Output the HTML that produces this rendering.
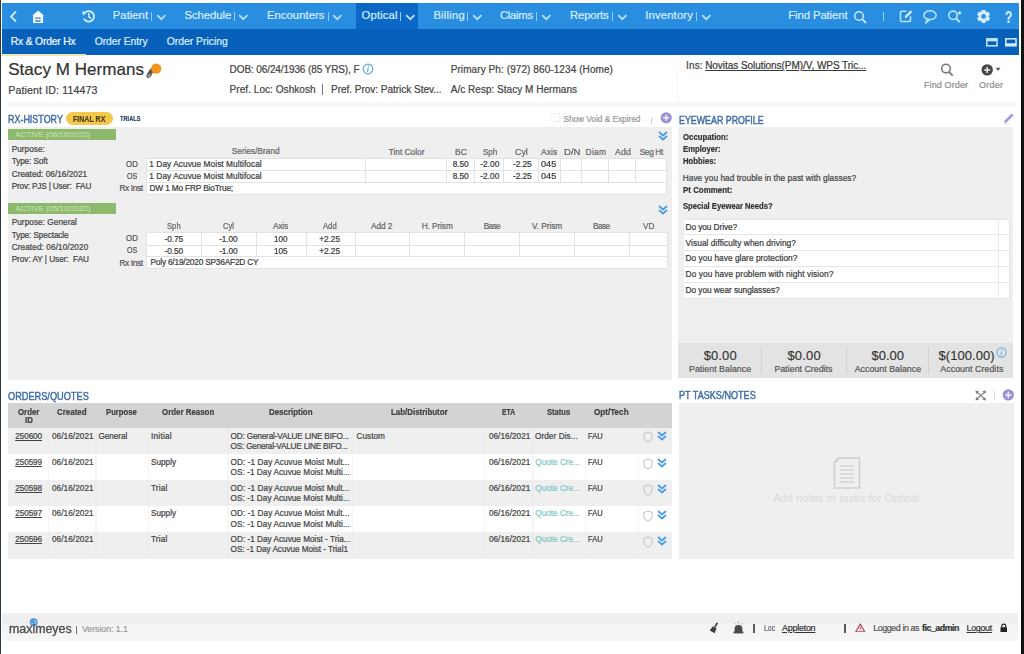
<!DOCTYPE html>
<html><head><meta charset="utf-8"><title>MaximEyes - Rx & Order Hx</title>
<style>
html,body{margin:0;padding:0;width:1024px;height:654px;overflow:hidden;background:#fff;}
body{position:relative;font-family:"Liberation Sans",sans-serif;}
body>div,body>svg{position:absolute;}
.t{white-space:pre;line-height:1;transform-origin:0 0;-webkit-text-stroke:0.22px currentColor;}
</style></head><body>
<div style="left:0.0px;top:0.0px;width:1024.0px;height:654.0px;background:#fff;"></div>
<div style="left:0.0px;top:0.0px;width:1.2px;height:654.0px;background:#2c3946;"></div>
<div style="left:1021.0px;top:0.0px;width:3.0px;height:654.0px;background:#121212;"></div>
<div style="left:2.0px;top:3.0px;width:1017.0px;height:27.0px;background:#2a8ee0;"></div>
<div style="left:356.0px;top:3.0px;width:62.0px;height:27.0px;background:#0b68c6;"></div>
<div style="left:150.5px;top:12.0px;width:1.0px;height:9.0px;background:#8fcfff;"></div>
<svg style="left:156.0px;top:13.8px" width="11" height="7" viewBox="0 0 11 7"><path d="M1.2 1.2 L5.3 5.2 L9.4 1.2" fill="none" stroke="#b8e2ff" stroke-width="1.7"/></svg>
<div style="left:233.5px;top:12.0px;width:1.0px;height:9.0px;background:#8fcfff;"></div>
<svg style="left:237.8px;top:13.8px" width="11" height="7" viewBox="0 0 11 7"><path d="M1.2 1.2 L5.3 5.2 L9.4 1.2" fill="none" stroke="#b8e2ff" stroke-width="1.7"/></svg>
<div style="left:327.5px;top:12.0px;width:1.0px;height:9.0px;background:#8fcfff;"></div>
<svg style="left:331.8px;top:13.8px" width="11" height="7" viewBox="0 0 11 7"><path d="M1.2 1.2 L5.3 5.2 L9.4 1.2" fill="none" stroke="#b8e2ff" stroke-width="1.7"/></svg>
<div style="left:399.5px;top:12.0px;width:1.0px;height:9.0px;background:#8fcfff;"></div>
<svg style="left:404.8px;top:13.8px" width="11" height="7" viewBox="0 0 11 7"><path d="M1.2 1.2 L5.3 5.2 L9.4 1.2" fill="none" stroke="#b8e2ff" stroke-width="1.7"/></svg>
<div style="left:466.5px;top:12.0px;width:1.0px;height:9.0px;background:#8fcfff;"></div>
<svg style="left:471.8px;top:13.8px" width="11" height="7" viewBox="0 0 11 7"><path d="M1.2 1.2 L5.3 5.2 L9.4 1.2" fill="none" stroke="#b8e2ff" stroke-width="1.7"/></svg>
<div style="left:535.5px;top:12.0px;width:1.0px;height:9.0px;background:#8fcfff;"></div>
<svg style="left:540.8px;top:13.8px" width="11" height="7" viewBox="0 0 11 7"><path d="M1.2 1.2 L5.3 5.2 L9.4 1.2" fill="none" stroke="#b8e2ff" stroke-width="1.7"/></svg>
<div style="left:611.5px;top:12.0px;width:1.0px;height:9.0px;background:#8fcfff;"></div>
<svg style="left:617.2px;top:13.8px" width="11" height="7" viewBox="0 0 11 7"><path d="M1.2 1.2 L5.3 5.2 L9.4 1.2" fill="none" stroke="#b8e2ff" stroke-width="1.7"/></svg>
<div style="left:695.5px;top:12.0px;width:1.0px;height:9.0px;background:#8fcfff;"></div>
<svg style="left:700.8px;top:13.8px" width="11" height="7" viewBox="0 0 11 7"><path d="M1.2 1.2 L5.3 5.2 L9.4 1.2" fill="none" stroke="#b8e2ff" stroke-width="1.7"/></svg>
<svg style="left:853.0px;top:9.5px" width="15" height="14" viewBox="0 0 15 14"><circle cx="6" cy="6" r="4.3" fill="none" stroke="#c4e7ff" stroke-width="1.6"/><path d="M9.2 9.2 L13 13" stroke="#c4e7ff" stroke-width="1.8"/></svg>
<div style="left:882.5px;top:12.0px;width:1.0px;height:9.0px;background:#8fd0ff;"></div>
<svg style="left:899.0px;top:9.0px" width="15" height="14" viewBox="0 0 15 14"><path d="M7.5 2.2 H2.8 a1.3 1.3 0 0 0 -1.3 1.3 V11.2 a1.3 1.3 0 0 0 1.3 1.3 H10.2 a1.3 1.3 0 0 0 1.3 -1.3 V7.2" fill="none" stroke="#b8e3ff" stroke-width="1.6"/><path d="M5.6 9.2 L6.1 6.8 L11.6 1.3 L13.4 3.1 L7.9 8.6 Z" fill="#c8eaff"/></svg>
<svg style="left:922.0px;top:8.5px" width="16" height="15" viewBox="0 0 16 15"><ellipse cx="8" cy="6.2" rx="6.2" ry="4.4" fill="none" stroke="#b8e3ff" stroke-width="1.5"/><path d="M5 10 L4 13.8 L7.8 10.6" fill="none" stroke="#b8e3ff" stroke-width="1.4"/></svg>
<svg style="left:947.0px;top:8.0px" width="16" height="16" viewBox="0 0 16 16"><circle cx="6" cy="7.3" r="4.2" fill="none" stroke="#b8e3ff" stroke-width="1.6"/><path d="M9.1 10.5 L12.8 14.2" stroke="#b8e3ff" stroke-width="1.9"/><path d="M12.6 3.2 V6.6 M10.9 4.9 H14.3" stroke="#c8eaff" stroke-width="1.5"/></svg>
<svg style="left:977.0px;top:9.6px" width="13.2" height="13" viewBox="0 0 13.2 13"><path d="M5.05,0.09 L8.15,0.09 L8.73,2.21 L9.16,2.46 L11.30,1.91 L12.84,4.58 L11.29,6.15 L11.29,6.65 L12.84,8.22 L11.30,10.89 L9.16,10.34 L8.73,10.59 L8.15,12.71 L5.05,12.71 L4.47,10.59 L4.04,10.34 L1.90,10.89 L0.36,8.22 L1.91,6.65 L1.91,6.15 L0.36,4.58 L1.90,1.91 L4.04,2.46 L4.47,2.21 Z M9.2,6.4 A2.6 2.6 0 1 0 4.0,6.4 A2.6 2.6 0 1 0 9.2,6.4 Z" fill="#d8f0ff" fill-rule="evenodd" stroke="#d8f0ff" stroke-width="0.6" stroke-linejoin="round"/></svg>
<svg style="left:8.5px;top:10.0px" width="9" height="13" viewBox="0 0 9 13"><path d="M7 1.5 L2 6.5 L7 11.5" fill="none" stroke="#cfeaff" stroke-width="1.8"/></svg>
<svg style="left:31.5px;top:9.5px" width="13" height="14" viewBox="0 0 13 14"><path d="M6.1 0.4 L11.9 5.6 L11.1 5.6 L11.1 13.1 L1.1 13.1 L1.1 5.6 L0.3 5.6 Z" fill="#eefaff"/><path d="M3.4 8.1 H5.8 M6.2 8.1 H8.6 M3.4 11 H5.8 M6.2 11 H8.6" stroke="#3a6f9e" stroke-width="1.3"/></svg>
<svg style="left:60.0px;top:14.0px" width="8" height="7" viewBox="0 0 8 7"><path d="M1 6.5 L7 0.5" stroke="#3f86cf" stroke-width="1.2"/></svg>
<svg style="left:80.5px;top:9.0px" width="15" height="15" viewBox="0 0 15 15"><path d="M2.9 9.64 A5.3 5.3 0 1 0 3.76 3.85" fill="none" stroke="#dcf1ff" stroke-width="1.8"/><path d="M1.0 2.6 L5.4 2.9 L2.4 6.8 Z" fill="#dcf1ff"/><path d="M7.8 3.9 V7.6 L10 9.7" fill="none" stroke="#d0ecff" stroke-width="1.5"/></svg>
<div style="left:2.0px;top:29.0px;width:1017.0px;height:26.0px;background:#0761ba;"></div>
<div style="left:2.0px;top:53.6px;width:84.0px;height:2.4px;background:#ece5b8;"></div>
<svg style="left:986.0px;top:37.5px" width="12" height="9" viewBox="0 0 12 9"><rect x="0.8" y="0.8" width="10.2" height="7" fill="none" stroke="#bfe6ff" stroke-width="1.5"/><rect x="0.8" y="0.8" width="10.2" height="2.5" fill="#bfe6ff"/></svg>
<svg style="left:1004.5px;top:37.5px" width="12" height="9" viewBox="0 0 12 9"><rect x="0.8" y="0.8" width="10.2" height="7" fill="none" stroke="#d6f0ff" stroke-width="1.5"/><rect x="0.8" y="5.3" width="10.2" height="2.5" fill="#d6f0ff"/></svg>
<div style="left:8.0px;top:102.0px;width:1008.0px;height:5.0px;background:linear-gradient(#fafafa,#f5f5f5 45%,#fbfbfb);filter:blur(0.6px);"></div>
<div style="left:676.5px;top:58.0px;width:1.0px;height:43.0px;background:#f6f6f6;"></div>
<svg style="left:145.0px;top:61.5px" width="18" height="17" viewBox="0 0 18 17"><path d="M1.2 13.6 L5.6 6.2 L9.8 10.6 Z" fill="#505050"/><ellipse cx="4.2" cy="13.4" rx="3.1" ry="1.9" fill="#6a6a6a" transform="rotate(-35 4.2 13.4)"/><ellipse cx="4.0" cy="13.6" rx="1.3" ry="0.8" fill="#bbb" transform="rotate(-35 4 13.6)"/><circle cx="11.2" cy="6.6" r="5.2" fill="#f5961c"/></svg>
<svg style="left:361.5px;top:62.5px" width="12" height="12" viewBox="0 0 12 12"><circle cx="6" cy="6" r="4.8" fill="none" stroke="#5aa6e6" stroke-width="1.2"/><path d="M6.2 4.8 L5.5 9" stroke="#5aa6e6" stroke-width="1.1"/><circle cx="6.4" cy="3.3" r="0.7" fill="#5aa6e6"/></svg>
<div style="left:322.3px;top:84.0px;width:1.0px;height:11.0px;background:#777;"></div>
<svg style="left:937.5px;top:61.5px" width="16" height="15" viewBox="0 0 16 15"><circle cx="8" cy="6.6" r="4.3" fill="none" stroke="#7a7a7a" stroke-width="1.6"/><path d="M11.1 9.8 L14.6 13.6" stroke="#7a7a7a" stroke-width="1.9"/></svg>
<svg style="left:980.0px;top:62.5px" width="22" height="13" viewBox="0 0 22 13"><circle cx="7.2" cy="6.9" r="5.7" fill="#474747"/><path d="M7.2 3.9 V9.9 M4.2 6.9 H10.2" stroke="#eee" stroke-width="1.5"/><path d="M15.8 4.8 H20.4 L18.1 8 Z" fill="#555"/></svg>
<div style="left:66.0px;top:112.0px;width:47.0px;height:13.0px;background:#f4c84a;border-radius:7px;"></div>
<div style="left:550.0px;top:113.0px;width:10.0px;height:9.0px;background:#fff;box-shadow:inset 0 0 0 1px #efefef;border-radius:1px;"></div>
<div style="left:651.2px;top:118.0px;width:1.0px;height:6.0px;background:#cfcfcf;"></div>
<svg style="left:660.0px;top:112.4px" width="12.5" height="11.5" viewBox="0 0 12.5 11.5"><circle cx="6.2" cy="5.8" r="5.6" fill="#9b91d6"/><path d="M6.2 2.8 V8.8 M3.2 5.8 H9.2" stroke="#f4f2ff" stroke-width="1.5"/></svg>
<div style="left:8.0px;top:127.0px;width:664.0px;height:253.0px;background:#efefef;"></div>
<svg style="left:658.4px;top:131.2px" width="10" height="10" viewBox="0 0 10 10"><path d="M1 1 L5 4.5 L9 1 M1 5 L5 8.5 L9 5" fill="none" stroke="#4b9de2" stroke-width="1.7"/></svg>
<svg style="left:658.2px;top:205.0px" width="10" height="10" viewBox="0 0 10 10"><path d="M1 1 L5 4.5 L9 1 M1 5 L5 8.5 L9 5" fill="none" stroke="#4b9de2" stroke-width="1.7"/></svg>
<div style="left:8.0px;top:129.0px;width:108.0px;height:11.0px;background:#8db96d;"></div>
<div style="left:146.0px;top:158.0px;width:520.0px;height:37.0px;background:#fff;"></div>
<div style="left:146.0px;top:157.8px;width:520.0px;height:1.0px;background:#e2e2e2;"></div>
<div style="left:146.0px;top:170.0px;width:520.0px;height:1.0px;background:#e2e2e2;"></div>
<div style="left:146.0px;top:182.1px;width:520.0px;height:1.0px;background:#e2e2e2;"></div>
<div style="left:146.0px;top:194.1px;width:520.0px;height:1.0px;background:#e2e2e2;"></div>
<div style="left:145.8px;top:158.0px;width:1.0px;height:37.0px;background:#e2e2e2;"></div>
<div style="left:666.0px;top:158.0px;width:1.0px;height:37.0px;background:#e2e2e2;"></div>
<div style="left:365.1px;top:158.0px;width:1.0px;height:25.0px;background:#e2e2e2;"></div>
<div style="left:446.4px;top:158.0px;width:1.0px;height:25.0px;background:#e2e2e2;"></div>
<div style="left:474.2px;top:158.0px;width:1.0px;height:25.0px;background:#e2e2e2;"></div>
<div style="left:503.2px;top:158.0px;width:1.0px;height:25.0px;background:#e2e2e2;"></div>
<div style="left:537.5px;top:158.0px;width:1.0px;height:25.0px;background:#e2e2e2;"></div>
<div style="left:559.5px;top:158.0px;width:1.0px;height:25.0px;background:#e2e2e2;"></div>
<div style="left:581.4px;top:158.0px;width:1.0px;height:25.0px;background:#e2e2e2;"></div>
<div style="left:607.9px;top:158.0px;width:1.0px;height:25.0px;background:#e2e2e2;"></div>
<div style="left:634.5px;top:158.0px;width:1.0px;height:25.0px;background:#e2e2e2;"></div>
<div style="left:8.0px;top:203.0px;width:108.0px;height:11.0px;background:#8db96d;"></div>
<div style="left:147.0px;top:232.0px;width:520.0px;height:36.0px;background:#fff;"></div>
<div style="left:147.0px;top:231.5px;width:520.0px;height:1.0px;background:#e2e2e2;"></div>
<div style="left:147.0px;top:244.5px;width:520.0px;height:1.0px;background:#e2e2e2;"></div>
<div style="left:147.0px;top:256.1px;width:520.0px;height:1.0px;background:#e2e2e2;"></div>
<div style="left:147.0px;top:267.9px;width:520.0px;height:1.0px;background:#e2e2e2;"></div>
<div style="left:146.1px;top:232.0px;width:1.0px;height:36.0px;background:#e2e2e2;"></div>
<div style="left:666.5px;top:232.0px;width:1.0px;height:36.0px;background:#e2e2e2;"></div>
<div style="left:200.9px;top:232.0px;width:1.0px;height:25.0px;background:#e2e2e2;"></div>
<div style="left:255.5px;top:232.0px;width:1.0px;height:25.0px;background:#e2e2e2;"></div>
<div style="left:305.5px;top:232.0px;width:1.0px;height:25.0px;background:#e2e2e2;"></div>
<div style="left:354.6px;top:232.0px;width:1.0px;height:25.0px;background:#e2e2e2;"></div>
<div style="left:409.0px;top:232.0px;width:1.0px;height:25.0px;background:#e2e2e2;"></div>
<div style="left:463.9px;top:232.0px;width:1.0px;height:25.0px;background:#e2e2e2;"></div>
<div style="left:519.2px;top:232.0px;width:1.0px;height:25.0px;background:#e2e2e2;"></div>
<div style="left:574.1px;top:232.0px;width:1.0px;height:25.0px;background:#e2e2e2;"></div>
<div style="left:629.0px;top:232.0px;width:1.0px;height:25.0px;background:#e2e2e2;"></div>
<div style="left:8.0px;top:403.0px;width:664.0px;height:25.0px;background:#d3d3d3;"></div>
<div style="left:8.0px;top:428.0px;width:664.0px;height:26.0px;background:#efefef;"></div>
<div style="left:8.0px;top:454.0px;width:664.0px;height:26.0px;background:#ffffff;"></div>
<div style="left:8.0px;top:480.0px;width:664.0px;height:26.0px;background:#efefef;"></div>
<div style="left:8.0px;top:506.0px;width:664.0px;height:26.0px;background:#ffffff;"></div>
<div style="left:8.0px;top:532.0px;width:664.0px;height:27.0px;background:#efefef;"></div>
<div style="left:47.5px;top:428.0px;width:1.5px;height:26.0px;background:#ececec;"></div>
<div style="left:47.5px;top:454.0px;width:1.5px;height:26.0px;background:#f5f5f5;"></div>
<div style="left:47.5px;top:480.0px;width:1.5px;height:26.0px;background:#ececec;"></div>
<div style="left:47.5px;top:506.0px;width:1.5px;height:26.0px;background:#f5f5f5;"></div>
<div style="left:47.5px;top:532.0px;width:1.5px;height:27.0px;background:#ececec;"></div>
<div style="left:95.2px;top:428.0px;width:1.5px;height:26.0px;background:#ececec;"></div>
<div style="left:95.2px;top:454.0px;width:1.5px;height:26.0px;background:#f5f5f5;"></div>
<div style="left:95.2px;top:480.0px;width:1.5px;height:26.0px;background:#ececec;"></div>
<div style="left:95.2px;top:506.0px;width:1.5px;height:26.0px;background:#f5f5f5;"></div>
<div style="left:95.2px;top:532.0px;width:1.5px;height:27.0px;background:#ececec;"></div>
<div style="left:147.8px;top:428.0px;width:1.5px;height:26.0px;background:#ececec;"></div>
<div style="left:147.8px;top:454.0px;width:1.5px;height:26.0px;background:#f5f5f5;"></div>
<div style="left:147.8px;top:480.0px;width:1.5px;height:26.0px;background:#ececec;"></div>
<div style="left:147.8px;top:506.0px;width:1.5px;height:26.0px;background:#f5f5f5;"></div>
<div style="left:147.8px;top:532.0px;width:1.5px;height:27.0px;background:#ececec;"></div>
<div style="left:227.2px;top:428.0px;width:1.5px;height:26.0px;background:#ececec;"></div>
<div style="left:227.2px;top:454.0px;width:1.5px;height:26.0px;background:#f5f5f5;"></div>
<div style="left:227.2px;top:480.0px;width:1.5px;height:26.0px;background:#ececec;"></div>
<div style="left:227.2px;top:506.0px;width:1.5px;height:26.0px;background:#f5f5f5;"></div>
<div style="left:227.2px;top:532.0px;width:1.5px;height:27.0px;background:#ececec;"></div>
<div style="left:351.8px;top:428.0px;width:1.5px;height:26.0px;background:#ececec;"></div>
<div style="left:351.8px;top:454.0px;width:1.5px;height:26.0px;background:#f5f5f5;"></div>
<div style="left:351.8px;top:480.0px;width:1.5px;height:26.0px;background:#ececec;"></div>
<div style="left:351.8px;top:506.0px;width:1.5px;height:26.0px;background:#f5f5f5;"></div>
<div style="left:351.8px;top:532.0px;width:1.5px;height:27.0px;background:#ececec;"></div>
<div style="left:483.9px;top:428.0px;width:1.5px;height:26.0px;background:#ececec;"></div>
<div style="left:483.9px;top:454.0px;width:1.5px;height:26.0px;background:#f5f5f5;"></div>
<div style="left:483.9px;top:480.0px;width:1.5px;height:26.0px;background:#ececec;"></div>
<div style="left:483.9px;top:506.0px;width:1.5px;height:26.0px;background:#f5f5f5;"></div>
<div style="left:483.9px;top:532.0px;width:1.5px;height:27.0px;background:#ececec;"></div>
<div style="left:532.0px;top:428.0px;width:1.5px;height:26.0px;background:#ececec;"></div>
<div style="left:532.0px;top:454.0px;width:1.5px;height:26.0px;background:#f5f5f5;"></div>
<div style="left:532.0px;top:480.0px;width:1.5px;height:26.0px;background:#ececec;"></div>
<div style="left:532.0px;top:506.0px;width:1.5px;height:26.0px;background:#f5f5f5;"></div>
<div style="left:532.0px;top:532.0px;width:1.5px;height:27.0px;background:#ececec;"></div>
<div style="left:584.9px;top:428.0px;width:1.5px;height:26.0px;background:#ececec;"></div>
<div style="left:584.9px;top:454.0px;width:1.5px;height:26.0px;background:#f5f5f5;"></div>
<div style="left:584.9px;top:480.0px;width:1.5px;height:26.0px;background:#ececec;"></div>
<div style="left:584.9px;top:506.0px;width:1.5px;height:26.0px;background:#f5f5f5;"></div>
<div style="left:584.9px;top:532.0px;width:1.5px;height:27.0px;background:#ececec;"></div>
<div style="left:637.9px;top:428.0px;width:1.5px;height:26.0px;background:#ececec;"></div>
<div style="left:637.9px;top:454.0px;width:1.5px;height:26.0px;background:#f5f5f5;"></div>
<div style="left:637.9px;top:480.0px;width:1.5px;height:26.0px;background:#ececec;"></div>
<div style="left:637.9px;top:506.0px;width:1.5px;height:26.0px;background:#f5f5f5;"></div>
<div style="left:637.9px;top:532.0px;width:1.5px;height:27.0px;background:#ececec;"></div>
<svg style="left:642.5px;top:431.0px" width="10" height="12" viewBox="0 0 10 12"><path d="M5 1 L9 2.5 V6 C9 8.5 7.2 10.2 5 11 C2.8 10.2 1 8.5 1 6 V2.5 Z" fill="none" stroke="#c8c8c8" stroke-width="1.1"/></svg>
<svg style="left:656.8px;top:431.0px" width="10" height="10" viewBox="0 0 10 10"><path d="M1 1 L5 4.5 L9 1 M1 5 L5 8.5 L9 5" fill="none" stroke="#4b9de2" stroke-width="1.7"/></svg>
<svg style="left:642.5px;top:457.5px" width="10" height="12" viewBox="0 0 10 12"><path d="M5 1 L9 2.5 V6 C9 8.5 7.2 10.2 5 11 C2.8 10.2 1 8.5 1 6 V2.5 Z" fill="none" stroke="#c8c8c8" stroke-width="1.1"/></svg>
<svg style="left:656.8px;top:457.5px" width="10" height="10" viewBox="0 0 10 10"><path d="M1 1 L5 4.5 L9 1 M1 5 L5 8.5 L9 5" fill="none" stroke="#4b9de2" stroke-width="1.7"/></svg>
<svg style="left:642.5px;top:483.5px" width="10" height="12" viewBox="0 0 10 12"><path d="M5 1 L9 2.5 V6 C9 8.5 7.2 10.2 5 11 C2.8 10.2 1 8.5 1 6 V2.5 Z" fill="none" stroke="#c8c8c8" stroke-width="1.1"/></svg>
<svg style="left:656.8px;top:483.5px" width="10" height="10" viewBox="0 0 10 10"><path d="M1 1 L5 4.5 L9 1 M1 5 L5 8.5 L9 5" fill="none" stroke="#4b9de2" stroke-width="1.7"/></svg>
<svg style="left:642.5px;top:509.5px" width="10" height="12" viewBox="0 0 10 12"><path d="M5 1 L9 2.5 V6 C9 8.5 7.2 10.2 5 11 C2.8 10.2 1 8.5 1 6 V2.5 Z" fill="none" stroke="#c8c8c8" stroke-width="1.1"/></svg>
<svg style="left:656.8px;top:509.5px" width="10" height="10" viewBox="0 0 10 10"><path d="M1 1 L5 4.5 L9 1 M1 5 L5 8.5 L9 5" fill="none" stroke="#4b9de2" stroke-width="1.7"/></svg>
<svg style="left:642.5px;top:535.5px" width="10" height="12" viewBox="0 0 10 12"><path d="M5 1 L9 2.5 V6 C9 8.5 7.2 10.2 5 11 C2.8 10.2 1 8.5 1 6 V2.5 Z" fill="none" stroke="#c8c8c8" stroke-width="1.1"/></svg>
<svg style="left:656.8px;top:535.5px" width="10" height="10" viewBox="0 0 10 10"><path d="M1 1 L5 4.5 L9 1 M1 5 L5 8.5 L9 5" fill="none" stroke="#4b9de2" stroke-width="1.7"/></svg>
<svg style="left:1001.5px;top:111.5px" width="13" height="13" viewBox="0 0 13 13"><path d="M2 11 L2.6 8.4 L9.6 1.4 L11.6 3.4 L4.6 10.4 Z" fill="#a59ddc"/><path d="M1.5 12 H6" stroke="#d6d2f0" stroke-width="0.8"/></svg>
<div style="left:678.0px;top:127.0px;width:335.0px;height:251.0px;background:#efefef;"></div>
<div style="left:683.0px;top:220.0px;width:326.0px;height:78.0px;background:#fff;"></div>
<div style="left:683.0px;top:219.2px;width:326.0px;height:1.0px;background:#e6e6e6;"></div>
<div style="left:683.0px;top:234.4px;width:326.0px;height:1.0px;background:#e6e6e6;"></div>
<div style="left:683.0px;top:250.3px;width:326.0px;height:1.0px;background:#e6e6e6;"></div>
<div style="left:683.0px;top:265.9px;width:326.0px;height:1.0px;background:#e6e6e6;"></div>
<div style="left:683.0px;top:281.5px;width:326.0px;height:1.0px;background:#e6e6e6;"></div>
<div style="left:683.0px;top:297.7px;width:326.0px;height:1.0px;background:#e6e6e6;"></div>
<div style="left:682.6px;top:220.0px;width:1.0px;height:78.0px;background:#f0f0f0;"></div>
<div style="left:1008.5px;top:220.0px;width:1.0px;height:78.0px;background:#e2e2e2;"></div>
<div style="left:998.2px;top:220.0px;width:1.0px;height:78.0px;background:#e8e8e8;"></div>
<div style="left:678.0px;top:343.0px;width:335.0px;height:35.0px;background:#e3e3e3;"></div>
<div style="left:760.5px;top:347.0px;width:1.0px;height:28.0px;background:#d2d2d2;"></div>
<div style="left:845.8px;top:347.0px;width:1.0px;height:28.0px;background:#d2d2d2;"></div>
<div style="left:928.1px;top:347.0px;width:1.0px;height:28.0px;background:#d2d2d2;"></div>
<svg style="left:995.8px;top:346.5px" width="11" height="11" viewBox="0 0 11 11"><circle cx="5.5" cy="5.5" r="4.6" fill="none" stroke="#6ab0ea" stroke-width="1.1"/><path d="M5.7 4.6 L5.1 8.2" stroke="#6ab0ea" stroke-width="1"/><circle cx="5.9" cy="3.1" r="0.6" fill="#6ab0ea"/></svg>
<svg style="left:974.5px;top:389.8px" width="11.5" height="11" viewBox="0 0 11.5 11"><path d="M2.2 2.2 L9.3 8.8 M9.3 2.2 L2.2 8.8" stroke="#8a8a8a" stroke-width="1.3"/><path d="M0.4 0.4 L4 1.2 L1.2 4 Z M11.1 0.4 L7.5 1.2 L10.3 4 Z M0.4 10.6 L4 9.8 L1.2 7 Z M11.1 10.6 L7.5 9.8 L10.3 7 Z" fill="#7c7c7c"/></svg>
<div style="left:993.5px;top:391.0px;width:1.0px;height:8.0px;background:#d6d6d6;"></div>
<svg style="left:1001.5px;top:389.0px" width="13" height="12" viewBox="0 0 13 12"><circle cx="6.3" cy="5.9" r="5.7" fill="#9b91d6"/><path d="M6.3 2.8 V9 M3.2 5.9 H9.4" stroke="#f4f2ff" stroke-width="1.5"/></svg>
<div style="left:679.0px;top:403.0px;width:335.0px;height:156.0px;background:#efefef;"></div>
<svg style="left:833.0px;top:456.5px" width="28" height="32" viewBox="0 0 28 32"><path d="M5 1 H26.5 V31 H1.5 V4.5 Z" fill="none" stroke="#d0d0d0" stroke-width="1.6"/><path d="M1.5 4.5 H5 V1" fill="none" stroke="#d0d0d0" stroke-width="1.2"/><path d="M7 9 H21 M7 13 H21 M7 17 H21 M7 21 H21 M7 25 H21" stroke="#d3d3d3" stroke-width="1.5"/></svg>
<div style="left:2.0px;top:613.0px;width:1016.0px;height:28.0px;background:linear-gradient(#f1f1f1,#eeeeee 30%,#f4f4f4 45%,#f5f5f5 90%,#f8f8f8);"></div>
<svg style="left:28.5px;top:617.5px" width="9.5" height="8.5" viewBox="0 0 9.5 8.5"><circle cx="4.7" cy="4.2" r="3.9" fill="#4a95d8"/><path d="M4.7 2.2 a2 2 0 1 1 -2 2" fill="none" stroke="#b9dcf6" stroke-width="0.9"/></svg>
<div style="left:76.1px;top:626.0px;width:1.0px;height:8.0px;background:#777;"></div>
<svg style="left:708.5px;top:621.5px" width="10" height="12" viewBox="0 0 10 12"><path d="M8.4 0.8 L5.9 5" stroke="#444" stroke-width="1.7"/><path d="M3.9 4.2 L7.5 6.3 L5.7 11.3 L0.7 8.5 Z" fill="#3f3f3f"/></svg>
<svg style="left:732.5px;top:620.5px" width="11" height="13" viewBox="0 0 11 13"><path d="M1.6 11 V7.8 a3.9 3.9 0 0 1 7.8 0 V11 Z" fill="#4a4a4a"/><rect x="0.6" y="10.6" width="9.8" height="1.8" fill="#4a4a4a"/><path d="M5.5 0.6 V2.4 M1.4 2.2 L2.6 3.4 M9.6 2.2 L8.4 3.4" stroke="#888" stroke-width="0.9"/></svg>
<div style="left:753.0px;top:624.0px;width:1.6px;height:9.0px;background:#5a5a5a;"></div>
<div style="left:844.4px;top:624.0px;width:1.6px;height:9.0px;background:#5a5a5a;"></div>
<svg style="left:855.3px;top:622.6px" width="10.5" height="9.6" viewBox="0 0 10.5 9.6"><path d="M5.25 1 L9.7 8.9 H0.8 Z" fill="none" stroke="#b9505c" stroke-width="1.3" stroke-linejoin="round"/><path d="M5.25 4 V6.6" stroke="#b9505c" stroke-width="1"/><circle cx="5.25" cy="7.7" r="0.5" fill="#b9505c"/></svg>
<svg style="left:999.5px;top:622.5px" width="7.5" height="9.5" viewBox="0 0 7.5 9.5"><path d="M1.8 4.2 V3 a1.95 1.95 0 0 1 3.9 0 V4.2" fill="none" stroke="#222" stroke-width="1.2"/><rect x="0.5" y="4.2" width="6.5" height="5" fill="#222"/></svg>
<div class="t" style="left:112.80px;top:10.23px;font-size:11.3px;color:#d6edff;letter-spacing:0.011px;">Patient</div>
<div class="t" style="left:184.40px;top:10.23px;font-size:11.3px;color:#d6edff;letter-spacing:-0.046px;">Schedule</div>
<div class="t" style="left:266.90px;top:10.23px;font-size:11.3px;color:#d6edff;letter-spacing:0.045px;">Encounters</div>
<div class="t" style="left:361.60px;top:10.23px;font-size:11.3px;color:#d6edff;letter-spacing:0.125px;">Optical</div>
<div class="t" style="left:433.40px;top:10.23px;font-size:11.3px;color:#d6edff;letter-spacing:0.191px;">Billing</div>
<div class="t" style="left:500.00px;top:10.23px;font-size:11.3px;color:#d6edff;letter-spacing:-0.294px;">Claims</div>
<div class="t" style="left:570.00px;top:10.23px;font-size:11.3px;color:#d6edff;letter-spacing:-0.151px;">Reports</div>
<div class="t" style="left:645.30px;top:10.23px;font-size:11.3px;color:#d6edff;letter-spacing:0.135px;">Inventory</div>
<div class="t" style="left:788.30px;top:10.23px;font-size:11.3px;color:#d6edff;letter-spacing:-0.095px;">Find Patient</div>
<div class="t" style="left:1005.00px;top:8.83px;font-size:16.5px;color:#d0ecff;font-weight:700;transform:scaleX(0.7400);transform-origin:0.00px 0;">?</div>
<div class="t" style="left:10.70px;top:37.08px;font-size:10.3px;color:#eef7ff;letter-spacing:-0.158px;">Rx &amp; Order Hx</div>
<div class="t" style="left:94.70px;top:37.08px;font-size:10.3px;color:#dbeeff;letter-spacing:-0.027px;">Order Entry</div>
<div class="t" style="left:166.80px;top:37.08px;font-size:10.3px;color:#dbeeff;letter-spacing:0.023px;">Order Pricing</div>
<div class="t" style="left:8.20px;top:61.11px;font-size:17px;color:#333;letter-spacing:0.051px;">Stacy M Hermans</div>
<div class="t" style="left:8.20px;top:85.03px;font-size:10.6px;color:#444;letter-spacing:0.137px;">Patient ID: 114473</div>
<div class="t" style="left:229.60px;top:64.53px;font-size:10.0px;color:#454545;letter-spacing:-0.105px;">DOB: 06/24/1936 (85 YRS), F</div>
<div class="t" style="left:229.60px;top:84.83px;font-size:10.0px;color:#454545;letter-spacing:0.054px;">Pref. Loc: Oshkosh</div>
<div class="t" style="left:331.00px;top:84.83px;font-size:10.0px;color:#454545;letter-spacing:-0.015px;">Pref. Prov: Patrick Stev...</div>
<div class="t" style="left:450.70px;top:64.53px;font-size:10.0px;color:#454545;letter-spacing:0.085px;">Primary Ph: (972) 860-1234 (Home)</div>
<div class="t" style="left:450.70px;top:84.83px;font-size:10.0px;color:#454545;letter-spacing:0.030px;">A/c Resp: Stacy M Hermans</div>
<div class="t" style="left:686.00px;top:61.33px;font-size:10.0px;color:#454545;letter-spacing:0.153px;">Ins:</div>
<div class="t" style="left:705.20px;top:61.33px;font-size:10.0px;color:#3a3a3a;letter-spacing:-0.052px;text-decoration:underline;">Novitas Solutions(PM)/V, WPS Tric...</div>
<div class="t" style="left:924.00px;top:81.18px;font-size:9.0px;color:#8e8e8e;letter-spacing:0.109px;">Find Order</div>
<div class="t" style="left:979.00px;top:81.18px;font-size:9.0px;color:#8e8e8e;letter-spacing:0.248px;">Order</div>
<div class="t" style="left:8.20px;top:114.23px;font-size:10.6px;color:#3f6ea6;transform:scaleX(0.8446);transform-origin:0.00px 0;-webkit-text-stroke:0.45px currentColor;">RX-HISTORY</div>
<div class="t" style="left:73.20px;top:114.79px;font-size:8.4px;color:#4f4318;font-weight:700;transform:scaleX(0.8429);transform-origin:0.00px 0;">FINAL RX</div>
<div class="t" style="left:119.75px;top:114.83px;font-size:8.0px;color:#2d4868;font-weight:700;transform:scaleX(0.7123);transform-origin:0.00px 0;">TRIALS</div>
<div class="t" style="left:563.40px;top:114.97px;font-size:8.3px;color:#9a9a9a;letter-spacing:-0.026px;">Show Void &amp; Expired</div>
<div class="t" style="left:15.30px;top:131.31px;font-size:7.9px;color:#c0ddaa;letter-spacing:-0.028px;">ACTIVE (06/16/2022)</div>
<div class="t" style="left:11.70px;top:145.56px;font-size:8.2px;color:#444;letter-spacing:0.044px;">Purpose:</div>
<div class="t" style="left:11.70px;top:158.06px;font-size:8.2px;color:#444;letter-spacing:-0.088px;">Type: Soft</div>
<div class="t" style="left:11.70px;top:170.56px;font-size:8.2px;color:#444;letter-spacing:0.039px;">Created: 06/16/2021</div>
<div class="t" style="left:11.70px;top:182.56px;font-size:8.2px;color:#444;letter-spacing:-0.167px;">Prov: PJS | User:  FAU</div>
<div class="t" style="left:231.80px;top:147.47px;font-size:8.3px;color:#666;letter-spacing:-0.013px;">Series/Brand</div>
<div class="t" style="left:388.75px;top:147.67px;font-size:8.3px;color:#666;letter-spacing:0.006px;">Tint Color</div>
<div class="t" style="left:455.00px;top:147.67px;font-size:8.3px;color:#666;transform:scaleX(1.0404);transform-origin:0.00px 0;">BC</div>
<div class="t" style="left:482.80px;top:147.67px;font-size:8.3px;color:#666;transform:scaleX(0.9704);transform-origin:0.00px 0;">Sph</div>
<div class="t" style="left:515.00px;top:147.67px;font-size:8.3px;color:#666;transform:scaleX(1.0708);transform-origin:0.00px 0;">Cyl</div>
<div class="t" style="left:541.00px;top:147.67px;font-size:8.3px;color:#666;letter-spacing:0.158px;">Axis</div>
<div class="t" style="left:563.75px;top:147.67px;font-size:8.3px;color:#666;transform:scaleX(1.1576);transform-origin:0.00px 0;">D/N</div>
<div class="t" style="left:585.60px;top:147.67px;font-size:8.3px;color:#666;letter-spacing:0.317px;">Diam</div>
<div class="t" style="left:614.70px;top:147.67px;font-size:8.3px;color:#666;transform:scaleX(1.0760);transform-origin:0.00px 0;">Add</div>
<div class="t" style="left:639.70px;top:147.67px;font-size:8.3px;color:#666;letter-spacing:-0.352px;">Seg Ht</div>
<div class="t" style="left:125.80px;top:159.70px;font-size:8.5px;color:#555;transform:scaleX(0.9277);transform-origin:0.00px 0;">OD</div>
<div class="t" style="left:126.50px;top:172.00px;font-size:8.5px;color:#555;transform:scaleX(0.8326);transform-origin:0.00px 0;">OS</div>
<div class="t" style="left:119.50px;top:183.97px;font-size:8.3px;color:#555;letter-spacing:-0.377px;">Rx Inst</div>
<div class="t" style="left:149.30px;top:159.57px;font-size:8.3px;color:#3c3c3c;letter-spacing:0.061px;">1 Day Acuvue Moist Multifocal</div>
<div class="t" style="left:149.30px;top:171.67px;font-size:8.3px;color:#3c3c3c;letter-spacing:0.061px;">1 Day Acuvue Moist Multifocal</div>
<div class="t" style="left:149.50px;top:183.57px;font-size:8.3px;color:#3c3c3c;letter-spacing:-0.159px;">DW 1 Mo FRP BioTrue;</div>
<div class="t" style="left:452.80px;top:160.17px;font-size:8.3px;color:#3c3c3c;letter-spacing:-0.111px;">8.50</div>
<div class="t" style="left:480.30px;top:160.17px;font-size:8.3px;color:#3c3c3c;letter-spacing:0.026px;">-2.00</div>
<div class="t" style="left:513.00px;top:160.17px;font-size:8.3px;color:#3c3c3c;letter-spacing:-0.099px;">-2.25</div>
<div class="t" style="left:541.25px;top:160.17px;font-size:8.3px;color:#3c3c3c;transform:scaleX(1.0999);transform-origin:0.00px 0;">045</div>
<div class="t" style="left:452.80px;top:171.87px;font-size:8.3px;color:#3c3c3c;letter-spacing:-0.111px;">8.50</div>
<div class="t" style="left:480.30px;top:171.87px;font-size:8.3px;color:#3c3c3c;letter-spacing:0.026px;">-2.00</div>
<div class="t" style="left:513.00px;top:171.87px;font-size:8.3px;color:#3c3c3c;letter-spacing:-0.099px;">-2.25</div>
<div class="t" style="left:541.25px;top:171.87px;font-size:8.3px;color:#3c3c3c;transform:scaleX(1.0999);transform-origin:0.00px 0;">045</div>
<div class="t" style="left:15.30px;top:205.11px;font-size:7.9px;color:#c0ddaa;letter-spacing:-0.006px;">ACTIVE (05/10/2022)</div>
<div class="t" style="left:11.70px;top:219.06px;font-size:8.2px;color:#444;letter-spacing:0.070px;">Purpose: General</div>
<div class="t" style="left:11.70px;top:231.86px;font-size:8.2px;color:#444;letter-spacing:-0.093px;">Type: Spectacle</div>
<div class="t" style="left:11.70px;top:243.86px;font-size:8.2px;color:#444;letter-spacing:0.105px;">Created: 06/10/2020</div>
<div class="t" style="left:11.70px;top:256.06px;font-size:8.2px;color:#444;letter-spacing:-0.025px;">Prov: AY | User:  FAU</div>
<div class="t" style="left:167.00px;top:221.77px;font-size:8.3px;color:#666;transform:scaleX(0.9242);transform-origin:0.00px 0;">Sph</div>
<div class="t" style="left:223.00px;top:221.77px;font-size:8.3px;color:#666;transform:scaleX(0.9061);transform-origin:0.00px 0;">Cyl</div>
<div class="t" style="left:273.00px;top:221.77px;font-size:8.3px;color:#666;letter-spacing:-0.175px;">Axis</div>
<div class="t" style="left:323.00px;top:221.77px;font-size:8.3px;color:#666;transform:scaleX(0.9242);transform-origin:0.00px 0;">Add</div>
<div class="t" style="left:371.00px;top:221.77px;font-size:8.3px;color:#666;letter-spacing:-0.067px;">Add 2</div>
<div class="t" style="left:421.70px;top:221.77px;font-size:8.3px;color:#666;letter-spacing:-0.099px;">H. Prism</div>
<div class="t" style="left:483.70px;top:221.77px;font-size:8.3px;color:#666;letter-spacing:-0.666px;">Base</div>
<div class="t" style="left:532.00px;top:221.77px;font-size:8.3px;color:#666;letter-spacing:-0.053px;">V. Prism</div>
<div class="t" style="left:593.00px;top:221.77px;font-size:8.3px;color:#666;letter-spacing:-0.566px;">Base</div>
<div class="t" style="left:643.00px;top:221.77px;font-size:8.3px;color:#666;transform:scaleX(0.9884);transform-origin:0.00px 0;">VD</div>
<div class="t" style="left:125.80px;top:234.20px;font-size:8.5px;color:#555;transform:scaleX(0.9277);transform-origin:0.00px 0;">OD</div>
<div class="t" style="left:126.50px;top:246.20px;font-size:8.5px;color:#555;transform:scaleX(0.8326);transform-origin:0.00px 0;">OS</div>
<div class="t" style="left:119.50px;top:258.57px;font-size:8.3px;color:#555;letter-spacing:-0.377px;">Rx Inst</div>
<div class="t" style="left:164.60px;top:234.87px;font-size:8.3px;color:#3c3c3c;letter-spacing:-0.124px;">-0.75</div>
<div class="t" style="left:219.20px;top:234.87px;font-size:8.3px;color:#3c3c3c;letter-spacing:-0.124px;">-1.00</div>
<div class="t" style="left:274.00px;top:234.87px;font-size:8.3px;color:#3c3c3c;transform:scaleX(0.9839);transform-origin:0.00px 0;">100</div>
<div class="t" style="left:319.30px;top:234.87px;font-size:8.3px;color:#3c3c3c;letter-spacing:-0.070px;">+2.25</div>
<div class="t" style="left:164.60px;top:246.57px;font-size:8.3px;color:#3c3c3c;letter-spacing:-0.124px;">-0.50</div>
<div class="t" style="left:219.20px;top:246.57px;font-size:8.3px;color:#3c3c3c;letter-spacing:-0.124px;">-1.00</div>
<div class="t" style="left:274.00px;top:246.57px;font-size:8.3px;color:#3c3c3c;transform:scaleX(0.9839);transform-origin:0.00px 0;">105</div>
<div class="t" style="left:319.30px;top:246.57px;font-size:8.3px;color:#3c3c3c;letter-spacing:-0.070px;">+2.25</div>
<div class="t" style="left:150.50px;top:258.27px;font-size:8.3px;color:#3c3c3c;letter-spacing:-0.199px;">Poly 6/19/2020 SP36AF2D CY</div>
<div class="t" style="left:8.20px;top:390.73px;font-size:10.6px;color:#3f6ea6;transform:scaleX(0.8684);transform-origin:0.00px 0;-webkit-text-stroke:0.45px currentColor;">ORDERS/QUOTES</div>
<div class="t" style="left:17.80px;top:407.94px;font-size:8.7px;color:#404040;font-weight:700;transform:scaleX(0.9062);transform-origin:0.00px 0;">Order</div>
<div class="t" style="left:25.40px;top:415.64px;font-size:8.7px;color:#404040;font-weight:700;transform:scaleX(0.9033);transform-origin:0.00px 0;">ID</div>
<div class="t" style="left:57.00px;top:407.94px;font-size:8.7px;color:#404040;font-weight:700;transform:scaleX(0.9144);transform-origin:0.00px 0;">Created</div>
<div class="t" style="left:106.00px;top:407.94px;font-size:8.7px;color:#404040;font-weight:700;transform:scaleX(0.8876);transform-origin:0.00px 0;">Purpose</div>
<div class="t" style="left:161.70px;top:407.94px;font-size:8.7px;color:#404040;font-weight:700;transform:scaleX(0.9099);transform-origin:0.00px 0;">Order Reason</div>
<div class="t" style="left:268.70px;top:407.94px;font-size:8.7px;color:#404040;font-weight:700;transform:scaleX(0.9098);transform-origin:0.00px 0;">Description</div>
<div class="t" style="left:390.50px;top:407.94px;font-size:8.7px;color:#404040;font-weight:700;transform:scaleX(0.9097);transform-origin:0.00px 0;">Lab/Distributor</div>
<div class="t" style="left:501.80px;top:407.94px;font-size:8.7px;color:#404040;font-weight:700;transform:scaleX(0.7849);transform-origin:0.00px 0;">ETA</div>
<div class="t" style="left:546.70px;top:407.94px;font-size:8.7px;color:#404040;font-weight:700;transform:scaleX(0.8720);transform-origin:0.00px 0;">Status</div>
<div class="t" style="left:594.00px;top:407.94px;font-size:8.7px;color:#404040;font-weight:700;transform:scaleX(0.9347);transform-origin:0.00px 0;">Opt/Tech</div>
<div class="t" style="left:15.20px;top:433.06px;font-size:8.2px;color:#444;letter-spacing:-0.073px;text-decoration:underline;">250600</div>
<div class="t" style="left:52.00px;top:433.06px;font-size:8.2px;color:#444;letter-spacing:0.064px;">06/16/2021</div>
<div class="t" style="left:98.50px;top:433.06px;font-size:8.2px;color:#444;letter-spacing:-0.068px;">General</div>
<div class="t" style="left:356.50px;top:433.06px;font-size:8.2px;color:#444;letter-spacing:0.022px;">Custom</div>
<div class="t" style="left:535.00px;top:433.06px;font-size:8.2px;color:#444;letter-spacing:0.075px;">Order Dis...</div>
<div class="t" style="left:151.00px;top:433.06px;font-size:8.2px;color:#444;letter-spacing:0.251px;">Initial</div>
<div class="t" style="left:230.60px;top:433.06px;font-size:8.2px;color:#444;letter-spacing:-0.170px;">OD: General-VALUE LINE BIFO...</div>
<div class="t" style="left:230.60px;top:443.36px;font-size:8.2px;color:#444;letter-spacing:-0.206px;">OS: General-VALUE LINE BIFO...</div>
<div class="t" style="left:488.90px;top:433.06px;font-size:8.2px;color:#444;letter-spacing:0.053px;">06/16/2021</div>
<div class="t" style="left:588.00px;top:433.06px;font-size:8.2px;color:#444;transform:scaleX(0.9244);transform-origin:0.00px 0;">FAU</div>
<div class="t" style="left:15.20px;top:459.16px;font-size:8.2px;color:#444;letter-spacing:-0.073px;text-decoration:underline;">250599</div>
<div class="t" style="left:52.00px;top:459.16px;font-size:8.2px;color:#444;letter-spacing:0.064px;">06/16/2021</div>
<div class="t" style="left:535.30px;top:459.16px;font-size:8.2px;color:#7fcac1;">Quote Cre...</div>
<div class="t" style="left:151.00px;top:459.16px;font-size:8.2px;color:#444;letter-spacing:0.012px;">Supply</div>
<div class="t" style="left:230.60px;top:459.16px;font-size:8.2px;color:#444;letter-spacing:0.081px;">OD: -1 Day Acuvue Moist Mult...</div>
<div class="t" style="left:230.60px;top:469.46px;font-size:8.2px;color:#444;letter-spacing:0.044px;">OS: -1 Day Acuvue Moist Multi...</div>
<div class="t" style="left:488.90px;top:459.16px;font-size:8.2px;color:#444;letter-spacing:0.053px;">06/16/2021</div>
<div class="t" style="left:588.00px;top:459.16px;font-size:8.2px;color:#444;transform:scaleX(0.9244);transform-origin:0.00px 0;">FAU</div>
<div class="t" style="left:15.20px;top:485.06px;font-size:8.2px;color:#444;letter-spacing:-0.073px;text-decoration:underline;">250598</div>
<div class="t" style="left:52.00px;top:485.06px;font-size:8.2px;color:#444;letter-spacing:0.064px;">06/16/2021</div>
<div class="t" style="left:535.30px;top:485.06px;font-size:8.2px;color:#7fcac1;">Quote Cre...</div>
<div class="t" style="left:151.00px;top:485.06px;font-size:8.2px;color:#444;letter-spacing:0.176px;">Trial</div>
<div class="t" style="left:230.60px;top:485.06px;font-size:8.2px;color:#444;letter-spacing:0.081px;">OD: -1 Day Acuvue Moist Mult...</div>
<div class="t" style="left:230.60px;top:495.36px;font-size:8.2px;color:#444;letter-spacing:0.044px;">OS: -1 Day Acuvue Moist Multi...</div>
<div class="t" style="left:488.90px;top:485.06px;font-size:8.2px;color:#444;letter-spacing:0.053px;">06/16/2021</div>
<div class="t" style="left:588.00px;top:485.06px;font-size:8.2px;color:#444;transform:scaleX(0.9244);transform-origin:0.00px 0;">FAU</div>
<div class="t" style="left:15.20px;top:510.36px;font-size:8.2px;color:#444;letter-spacing:-0.073px;text-decoration:underline;">250597</div>
<div class="t" style="left:52.00px;top:510.36px;font-size:8.2px;color:#444;letter-spacing:0.064px;">06/16/2021</div>
<div class="t" style="left:535.30px;top:510.36px;font-size:8.2px;color:#7fcac1;">Quote Cre...</div>
<div class="t" style="left:151.00px;top:510.36px;font-size:8.2px;color:#444;letter-spacing:0.012px;">Supply</div>
<div class="t" style="left:230.60px;top:510.36px;font-size:8.2px;color:#444;letter-spacing:0.081px;">OD: -1 Day Acuvue Moist Mult...</div>
<div class="t" style="left:230.60px;top:520.66px;font-size:8.2px;color:#444;letter-spacing:0.044px;">OS: -1 Day Acuvue Moist Multi...</div>
<div class="t" style="left:488.90px;top:510.36px;font-size:8.2px;color:#444;letter-spacing:0.053px;">06/16/2021</div>
<div class="t" style="left:588.00px;top:510.36px;font-size:8.2px;color:#444;transform:scaleX(0.9244);transform-origin:0.00px 0;">FAU</div>
<div class="t" style="left:15.20px;top:536.06px;font-size:8.2px;color:#444;letter-spacing:-0.073px;text-decoration:underline;">250596</div>
<div class="t" style="left:52.00px;top:536.06px;font-size:8.2px;color:#444;letter-spacing:0.064px;">06/16/2021</div>
<div class="t" style="left:535.30px;top:536.06px;font-size:8.2px;color:#7fcac1;">Quote Cre...</div>
<div class="t" style="left:151.00px;top:536.06px;font-size:8.2px;color:#444;letter-spacing:0.176px;">Trial</div>
<div class="t" style="left:230.60px;top:536.06px;font-size:8.2px;color:#444;letter-spacing:0.013px;">OD: -1 Day Acuvue Moist - Tria...</div>
<div class="t" style="left:230.60px;top:546.36px;font-size:8.2px;color:#444;letter-spacing:-0.045px;">OS: -1 Day Acuvue Moist - Trial1</div>
<div class="t" style="left:488.90px;top:536.06px;font-size:8.2px;color:#444;letter-spacing:0.053px;">06/16/2021</div>
<div class="t" style="left:588.00px;top:536.06px;font-size:8.2px;color:#444;transform:scaleX(0.9244);transform-origin:0.00px 0;">FAU</div>
<div class="t" style="left:678.80px;top:114.63px;font-size:10.6px;color:#3f6ea6;transform:scaleX(0.8361);transform-origin:0.00px 0;-webkit-text-stroke:0.45px currentColor;">EYEWEAR PROFILE</div>
<div class="t" style="left:682.70px;top:132.84px;font-size:8.7px;color:#333;font-weight:700;transform:scaleX(0.8959);transform-origin:0.00px 0;">Occupation:</div>
<div class="t" style="left:682.70px;top:144.54px;font-size:8.7px;color:#333;font-weight:700;transform:scaleX(0.8852);transform-origin:0.00px 0;">Employer:</div>
<div class="t" style="left:682.70px;top:157.24px;font-size:8.7px;color:#333;font-weight:700;transform:scaleX(0.8908);transform-origin:0.00px 0;">Hobbies:</div>
<div class="t" style="left:682.70px;top:173.77px;font-size:8.3px;color:#444;letter-spacing:0.041px;">Have you had trouble in the past with glasses?</div>
<div class="t" style="left:682.70px;top:185.54px;font-size:8.7px;color:#333;font-weight:700;transform:scaleX(0.9121);transform-origin:0.00px 0;">Pt Comment:</div>
<div class="t" style="left:682.70px;top:201.54px;font-size:8.7px;color:#333;font-weight:700;transform:scaleX(0.8791);transform-origin:0.00px 0;">Special Eyewear Needs?</div>
<div class="t" style="left:685.60px;top:222.67px;font-size:8.3px;color:#3a3a3a;letter-spacing:-0.088px;">Do you Drive?</div>
<div class="t" style="left:685.60px;top:238.57px;font-size:8.3px;color:#3a3a3a;letter-spacing:0.075px;">Visual difficulty when driving?</div>
<div class="t" style="left:685.60px;top:254.17px;font-size:8.3px;color:#3a3a3a;letter-spacing:0.036px;">Do you have glare protection?</div>
<div class="t" style="left:685.60px;top:269.77px;font-size:8.3px;color:#3a3a3a;letter-spacing:0.091px;">Do you have problem with night vision?</div>
<div class="t" style="left:685.60px;top:285.97px;font-size:8.3px;color:#3a3a3a;letter-spacing:-0.045px;">Do you wear sunglasses?</div>
<div class="t" style="left:703.70px;top:349.20px;font-size:13px;color:#333;letter-spacing:0.100px;-webkit-text-stroke:0.15px currentColor;">$0.00</div>
<div class="t" style="left:689.00px;top:365.25px;font-size:8.8px;color:#555;letter-spacing:0.034px;">Patient Balance</div>
<div class="t" style="left:787.40px;top:349.20px;font-size:13px;color:#333;letter-spacing:0.200px;-webkit-text-stroke:0.15px currentColor;">$0.00</div>
<div class="t" style="left:774.60px;top:365.25px;font-size:8.8px;color:#555;letter-spacing:0.007px;">Patient Credits</div>
<div class="t" style="left:871.40px;top:349.20px;font-size:13px;color:#333;letter-spacing:0.025px;-webkit-text-stroke:0.15px currentColor;">$0.00</div>
<div class="t" style="left:854.70px;top:365.25px;font-size:8.8px;color:#555;letter-spacing:0.027px;">Account Balance</div>
<div class="t" style="left:938.50px;top:349.20px;font-size:13px;color:#333;letter-spacing:0.047px;-webkit-text-stroke:0.15px currentColor;">$(100.00)</div>
<div class="t" style="left:940.30px;top:365.25px;font-size:8.8px;color:#555;letter-spacing:0.065px;">Account Credits</div>
<div class="t" style="left:678.80px;top:390.43px;font-size:10.6px;color:#3f6ea6;transform:scaleX(0.8575);transform-origin:0.00px 0;-webkit-text-stroke:0.45px currentColor;">PT TASKS/NOTES</div>
<div class="t" style="left:773.20px;top:492.59px;font-size:11px;color:#dadada;letter-spacing:0.067px;-webkit-text-stroke:0;">Add notes or tasks for Optical</div>
<div class="t" style="left:8.60px;top:623.30px;font-size:12.4px;color:#4d4d4d;transform:scaleX(0.9990);transform-origin:0.00px 0;-webkit-text-stroke:0.35px currentColor;">maximeyes</div>
<div class="t" style="left:82.00px;top:624.55px;font-size:8.8px;color:#9a9a9a;letter-spacing:-0.051px;">Version: 1.1</div>
<div class="t" style="left:764.00px;top:624.07px;font-size:8.9px;color:#666;transform:scaleX(0.7733);transform-origin:0.00px 0;">Loc</div>
<div class="t" style="left:782.00px;top:624.07px;font-size:8.9px;color:#333;letter-spacing:-0.214px;text-decoration:underline;">Appleton</div>
<div class="t" style="left:873.30px;top:624.07px;font-size:8.9px;color:#555;letter-spacing:-0.426px;">Logged in as</div>
<div class="t" style="left:922.00px;top:624.07px;font-size:8.9px;color:#333;font-weight:700;letter-spacing:-0.501px;">fic_admin</div>
<div class="t" style="left:966.60px;top:624.07px;font-size:8.9px;color:#333;letter-spacing:-0.316px;text-decoration:underline;">Logout</div>
</body></html>
